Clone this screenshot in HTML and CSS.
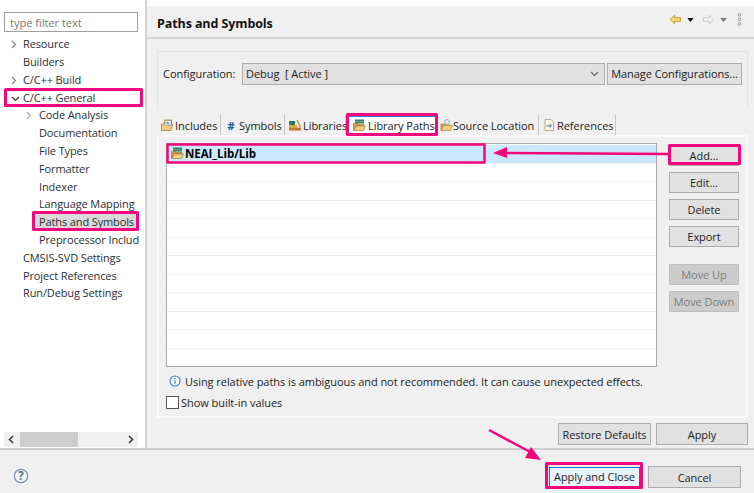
FILE: index.html
```html
<!DOCTYPE html>
<html lang="en">
<head>
<meta charset="utf-8">
<title>Paths and Symbols</title>
<link rel="stylesheet" href="styles.css">
</head>
<body>
<svg class="defs" width="0" height="0" aria-hidden="true">
  <symbol id="folder-lib" viewBox="0 0 14 14">
    <rect x="3" y="1.500" width="9" height="2" fill="#2f7f8f"/>
    <rect x="3" y="3.500" width="9" height="2" fill="#3e8a4e"/>
    <path d="M1.500 5.500h4l1 1h5.500v1.500H4.500L2.500 12.500H1.500z" fill="#c99a4a" stroke="#9a7230" stroke-width=".6"/>
    <path d="M4 8h9.500l-2 4.500H2z" fill="#f2cf7e" stroke="#a87c34" stroke-width=".7"/>
  </symbol>
</svg>
<div class="dialog">
  <div class="main">
    <aside class="sidebar">
      <input class="filter" type="text" placeholder="type filter text">
      <ul class="tree">
        <li class="node"><svg class="twist" viewBox="0 0 9 9"><path d="M3 1l3.500 3.500L3 8" /></svg>Resource</li>
        <li class="node">Builders</li>
        <li class="node"><svg class="twist" viewBox="0 0 9 9"><path d="M3 1l3.500 3.500L3 8" /></svg>C/C++ Build</li>
        <li class="node"><svg class="twist open" viewBox="0 0 9 9"><path d="M1 3l3.500 3.500L8 3" /></svg>C/C++ General</li>
        <li class="node sub"><svg class="twist" viewBox="0 0 9 9"><path d="M3 1l3.500 3.500L3 8" /></svg>Code Analysis</li>
        <li class="node sub">Documentation</li>
        <li class="node sub">File Types</li>
        <li class="node sub">Formatter</li>
        <li class="node sub">Indexer</li>
        <li class="node sub">Language Mapping</li>
        <li class="node sub"><span class="selected">Paths and Symbols</span></li>
        <li class="node sub">Preprocessor Includ</li>
        <li class="node">CMSIS-SVD Settings</li>
        <li class="node">Project References</li>
        <li class="node">Run/Debug Settings</li>
      </ul>
      <div class="hscroll">
        <svg class="arrow" viewBox="0 0 9 9"><path d="M6 1L2.500 4.500 6 8"/></svg>
        <div class="track"><div class="thumb"></div></div>
        <svg class="arrow" viewBox="0 0 9 9"><path d="M3 1l3.500 3.500L3 8"/></svg>
      </div>
    </aside>
    <section class="content">
      <header class="title-bar">
        <h1>Paths and Symbols</h1>
        <div class="nav">
          <svg class="nav-arrow" viewBox="0 0 14 12"><path d="M1 6l5-4.500V4h6.500v4H6v2.500z" fill="#f6d77e" stroke="#c8962c"/></svg>
          <svg class="nav-drop" viewBox="0 0 8 5"><path d="M0 0h8L4 5z" fill="#111"/></svg>
          <svg class="nav-arrow" viewBox="0 0 14 12"><path d="M13 6L8 1.500V4H1.500v4H8v2.500z" fill="#f4f4f4" stroke="#c4c4c4"/></svg>
          <svg class="nav-drop" viewBox="0 0 8 5"><path d="M0 0h8L4 5z" fill="#777"/></svg>
          <svg class="nav-more" viewBox="0 0 5 13"><g fill="none" stroke="#999"><circle cx="2.500" cy="2" r="1.400"/><circle cx="2.500" cy="6.500" r="1.400"/><circle cx="2.500" cy="11" r="1.400"/></g></svg>
        </div>
      </header>
      <div class="page">
        <div class="config">
          <label class="config-label">Configuration:</label>
          <div class="combo"><span>Debug&nbsp; [ Active ]</span><svg class="combo-arrow" viewBox="0 0 9 9"><path d="M1 3l3.500 3.500L8 3"/></svg></div>
          <button class="btn manage">Manage Configurations...</button>
        </div>
        <div class="tabs">
          <div class="tab"><svg class="ico" viewBox="0 0 14 14"><path d="M1.500 6h3V2h7v4h1L11 12.500H1.500z" fill="#f2cf7e" stroke="#a87c34" stroke-width=".8"/><rect x="5" y="2.500" width="6" height="5" fill="#fff" stroke="#8a8a8a" stroke-width=".6"/><path d="M7 3.500v3M7 5.200h2v1.300" fill="none" stroke="#2a5f9e" stroke-width=".8"/></svg>Includes</div>
          <div class="tab"><span class="hash">#</span>Symbols</div>
          <div class="tab"><svg class="ico" viewBox="0 0 14 14"><rect x="1" y="3" width="3" height="4" fill="#2f7f8f"/><rect x="4" y="3" width="3" height="4" fill="#2f6f4f"/><rect x="1" y="7" width="8" height="2.500" fill="#e0a83c"/><rect x="1" y="9.500" width="12" height="3" fill="#c9772f"/><path d="M9 2l3.500 7" stroke="#b8a24a" stroke-width="1.600"/></svg>Libraries</div>
          <div class="tab active"><svg class="ico"><use href="#folder-lib"/></svg>Library Paths</div>
          <div class="tab tight"><svg class="ico" viewBox="0 0 14 14"><path d="M1.500 5.500h4l1 1h5v1h-7l-2 5h-1z" fill="#c99a4a"/><path d="M4 7.500h9.500l-2 5H2z" fill="#f2cf7e" stroke="#a87c34" stroke-width=".7"/><circle cx="8" cy="4" r="2.500" fill="#e6f0f6" stroke="#7f9fb5" stroke-width=".8"/></svg>Source Location</div>
          <div class="tab"><svg class="ico" viewBox="0 0 14 14"><path d="M3 1.500h6l2.500 2.500v8.500H3z" fill="#fbf6e6" stroke="#a49a80" stroke-width=".8"/><path d="M4.500 7h3V5l3 2.800-3 2.700V8.700h-3z" fill="#8fa7bd"/></svg>References</div>
        </div>
        <div class="tab-panel">
          <div class="table-row">
            <div class="table">
              <div class="row highlighted"><svg class="ico row-ico"><use href="#folder-lib"/></svg><strong>NEAI_Lib/Lib</strong></div>
              <div class="row"></div><div class="row"></div><div class="row"></div><div class="row"></div><div class="row"></div><div class="row"></div><div class="row"></div><div class="row"></div><div class="row"></div><div class="row"></div><div class="row"></div>
            </div>
            <div class="side-buttons">
              <button class="btn side">Add...</button>
              <button class="btn side">Edit...</button>
              <button class="btn side">Delete</button>
              <button class="btn side">Export</button>
              <button class="btn side disabled gap">Move Up</button>
              <button class="btn side disabled">Move Down</button>
            </div>
          </div>
          <p class="info"><svg class="info-ico" viewBox="0 0 12 12"><circle cx="6" cy="6" r="5" fill="#fff" stroke="#2f7fc0" stroke-width="1.100"/><path d="M6 5.200v3.600M6 3v1.300" stroke="#2f7fc0" stroke-width="1.200"/></svg>Using relative paths is ambiguous and not recommended. It can cause unexpected effects.</p>
          <label class="check"><span class="box"></span>Show built-in values</label>
        </div>
        <div class="page-buttons">
          <button class="btn restore">Restore Defaults</button>
          <button class="btn apply">Apply</button>
        </div>
      </div>
    </section>
  </div>
  <footer class="footer">
    <svg class="help" viewBox="0 0 18 18"><circle cx="9" cy="9" r="7.500" fill="#f6f8fb" stroke="#7d8ea8" stroke-width="1.400"/><text x="9" y="13.500" text-anchor="middle" class="help-q">?</text></svg>
    <div class="footer-buttons">
      <button class="btn primary">Apply and Close</button>
      <button class="btn cancel">Cancel</button>
    </div>
  </footer>
</div>
<svg class="marks" viewBox="0 0 754 493" aria-hidden="true">
  <g fill="none" stroke="#f4067c" stroke-width="3" stroke-linejoin="round">
    <rect x="5.500" y="89.500" width="136" height="16"/>
    <rect x="33.500" y="212.500" width="104" height="17"/>
    <rect x="347.500" y="114.500" width="89" height="20"/>
    <rect x="167.500" y="144.500" width="317" height="18" stroke-width="2.500"/>
    <rect x="669.500" y="145.500" width="70" height="18"/>
    <rect x="546.500" y="463.500" width="95" height="24"/>
    <path d="M670 154L505 153" stroke-width="2.500"/>
    <path d="M489 430L532 453" stroke-width="2.500"/>
  </g>
  <path d="M493 153l14-6v11z" fill="#f4067c"/>
  <path d="M541 460l-16-2 6-11z" fill="#f4067c"/>
</svg>
</body>
</html>
```
FILE: styles.css
```css
* { box-sizing: border-box; }
html, body { margin: 0; padding: 0; }
body {
  width: 754px;
  height: 493px;
  overflow: hidden;
  position: relative;
  background: #f0f0f0;
  color: #222;
  font: 11px/1 "Open Sans", "Noto Sans", sans-serif;
  letter-spacing: -.05px;
}
.defs { position: absolute; }
.dialog { display: flex; flex-direction: column; height: 493px; }
.main { display: flex; height: 450px; border-bottom: 2px solid #d0d0d0; }

.sidebar {
  width: 147px;
  flex: none;
  background: #fff;
  border-right: 2px solid #d4d4d4;
  padding: 12px 7px 0 4px;
  display: flex;
  flex-direction: column;
}
.filter {
  width: 134px;
  height: 20px;
  border: 1px solid #a0a0a0;
  padding: 0 5px;
  font: inherit;
  background: #fff;
  outline: none;
}
.filter::placeholder { color: #777; }
.tree { list-style: none; margin: 3.300px 0 0; padding: 0; width: 134px; flex: 1; letter-spacing: -.12px; }
.node {
  height: 17.800px;
  line-height: 17.800px;
  padding-left: 19px;
  position: relative;
  white-space: nowrap;
  color: #2a3038;
}
.node.sub { padding-left: 35px; }
.selected { display: inline-block; height: 17px; background: #d9d9d9; margin-left: -4px; padding: 0 3px 0 4px; }
.twist { position: absolute; left: 5px; top: 5px; width: 9px; height: 9px; fill: none; stroke: #888; stroke-width: 1.200; }
.twist.open { stroke: #333; left: 7px; }
.sub .twist { left: 20px; stroke: #aaa; }
.hscroll { height: 15px; width: 134px; margin-bottom: 1px; display: flex; background: #f0f0f0; align-items: center; }
.arrow { width: 9px; height: 9px; margin: 0 3px 0 3px; fill: none; stroke: #333; stroke-width: 1.500; flex: none; }
.track { flex: 1; height: 15px; }
.thumb { width: 58px; height: 15px; background: #cdcdcd; margin-left: 1px; }

.content { flex: 1; display: flex; flex-direction: column; min-width: 0; }
.title-bar {
  margin-top: 6px;
  height: 33px;
  padding: 5px 12px 0 10px;
  border-bottom: 2px solid #d4d4d4;
  display: flex;
  align-items: center;
  justify-content: space-between;
  background: #f0f0f0;
  box-shadow: 0 -6px 0 #fff;
}
h1 { margin: 0; font-size: 12.500px; font-weight: 700; color: #111; letter-spacing: -.1px; }
.nav { display: flex; align-items: center; gap: 5px; margin-top: -9px; }
.nav-arrow { width: 13px; height: 11px; }
.nav-drop { width: 7px; height: 4px; margin-right: 3px; }
.nav-more { width: 5px; height: 13px; margin-left: 2px; }

.page { padding: 12px 6px 0 10px; flex: 1; display: flex; flex-direction: column; }
.config {
  height: 58px;
  border: 1px solid #e4e4e4;
  border-bottom: 0;
  display: flex;
  align-items: center;
  padding: 0 5px 14px 5px;
}
.config-label { width: 79px; flex: none; }
.combo {
  width: 363px;
  height: 22px;
  background: #e1e1e1;
  border: 1px solid #adadad;
  padding: 0 5px 1px 3px;
  display: flex;
  align-items: center;
  justify-content: space-between;
}
.combo-arrow { width: 9px; height: 9px; fill: none; stroke: #666; stroke-width: 1.200; }
.btn {
  font: inherit;
  letter-spacing: inherit;
  color: #222;
  background: #e1e1e1;
  border: 1px solid #adadad;
  padding: 0;
  white-space: nowrap;
}
.manage { width: 135px; height: 22px; margin-left: 2px; }

.tabs {
  display: grid;
  grid-template-columns: 64px 64px 61px 92px 101px 77px;
  height: 20px;
  margin-top: 6px;
}
.tab {
  display: flex;
  align-items: center;
  gap: 1px;
  padding: 0 0 0 3px;
  border-right: 1px solid #c8c8c8;
  white-space: nowrap;
}
.tab.active { background: #fff; border-top: 2px solid #2f7fd0; border-right: 0; padding: 0 0 2px 6px; gap: 2px; }
.tab.tight { padding-left: 1px; gap: 0; }
.ico { width: 14px; height: 14px; flex: none; }
.hash { color: #2a5f9e; font-weight: 700; width: 14px; text-align: center; }

.tab-panel {
  height: 283px;
  background: #f0f0f0;
  border: 2px solid #fafafa;
  padding: 6px 7px 0 7px;
  display: flex;
  flex-direction: column;
}
.table-row { display: flex; gap: 12px; }
.table { flex: none; width: 491px; height: 224px; background: #fff; border: 1px solid #a8a8a8; overflow: hidden; padding-top: 1px; }
.row { height: 18.500px; border-bottom: 1px solid #efefef; display: flex; align-items: center; padding-left: 3px; }
.row.highlighted { background: #cce8ff; padding-bottom: 1px; }
.row strong { font-size: 11.500px; font-weight: 700; color: #000; margin-left: 1px; }
.side-buttons { flex: none; display: flex; flex-direction: column; gap: 6px; padding-top: 2px; }
.btn.side { width: 70px; height: 21px; }
.btn.side.disabled { background: #cccccc; border-color: #bfbfbf; color: #7d7d7d; }
.btn.side.gap { margin-top: 11px; }
.info { margin: 7px 0 0 3px; display: flex; align-items: center; gap: 4px; height: 14px; }
.info-ico { width: 12px; height: 12px; flex: none; }
.check { display: flex; align-items: center; gap: 2px; margin-top: 7px; height: 14px; }
.box { width: 13px; height: 13px; background: #fff; border: 1px solid #555; }

.page-buttons { display: flex; justify-content: flex-end; gap: 5px; margin-top: 5px; }
.restore { width: 93px; height: 22px; }
.apply { width: 92px; height: 22px; }

.footer { flex: 1; display: flex; align-items: center; justify-content: space-between; padding: 0 13px 0 13px; background: #f0f0f0; }
.help { width: 16px; height: 16px; margin-top: 8px; }
.help-q { font: 700 13px "Open Sans", sans-serif; fill: #5f6f88; }
.footer-buttons { display: flex; gap: 8px; align-items: center; margin-top: 12px; margin-bottom: 1px; }
.primary { width: 91px; height: 20px; background: #e8f3fd; border: 1px solid #0078d7; margin-top: -1px; }
.cancel { width: 93px; height: 22px; }

.marks { position: absolute; left: 0; top: 0; width: 754px; height: 493px; pointer-events: none; }
```
